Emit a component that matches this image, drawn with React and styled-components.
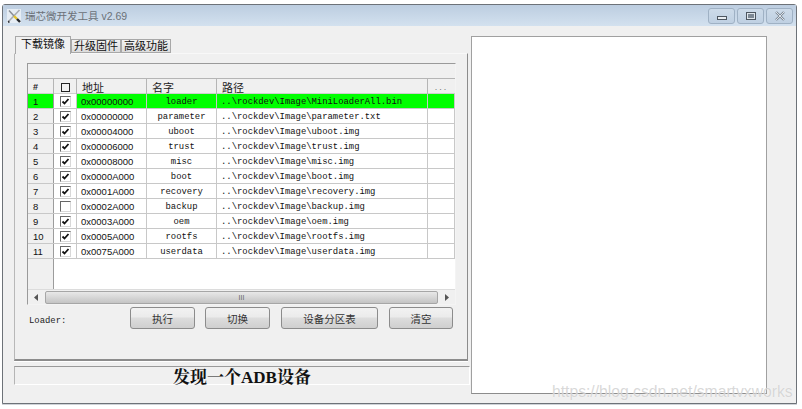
import styled, { createGlobalStyle } from 'styled-components';

const GlobalStyle = createGlobalStyle`
  html, body {
    margin: 0;
    padding: 0;
    background: #ffffff;
  }
`;

const CJK = '"Liberation Sans", "Noto Sans CJK SC", sans-serif';
const MONO = '"Liberation Mono", "Noto Sans CJK SC", monospace';
const SERIF = '"Liberation Serif", "Noto Serif CJK SC", "Noto Sans CJK SC", serif';

const rows = [
  ['1', true, '0x00000000', 'loader', '..\\rockdev\\Image\\MiniLoaderAll.bin'],
  ['2', true, '0x00000000', 'parameter', '..\\rockdev\\Image\\parameter.txt'],
  ['3', true, '0x00004000', 'uboot', '..\\rockdev\\Image\\uboot.img'],
  ['4', true, '0x00006000', 'trust', '..\\rockdev\\Image\\trust.img'],
  ['5', true, '0x00008000', 'misc', '..\\rockdev\\Image\\misc.img'],
  ['6', true, '0x0000A000', 'boot', '..\\rockdev\\Image\\boot.img'],
  ['7', true, '0x0001A000', 'recovery', '..\\rockdev\\Image\\recovery.img'],
  ['8', false, '0x0002A000', 'backup', '..\\rockdev\\Image\\backup.img'],
  ['9', true, '0x0003A000', 'oem', '..\\rockdev\\Image\\oem.img'],
  ['10', true, '0x0005A000', 'rootfs', '..\\rockdev\\Image\\rootfs.img'],
  ['11', true, '0x0075A000', 'userdata', '..\\rockdev\\Image\\userdata.img'],
];

const COLUMNS = '26px 23px 70px 70px 211px 1fr';

function App() {
  return (
    <>
      <GlobalStyle />
      <Page>
        <Window>
          <TitleBar>
            <AppIcon viewBox="0 0 14 14">
              <path d="M0 0h14v14H0z" fill="#e6edf4" />
              <path d="M12.500 1L2 12" stroke="#a8adb3" strokeWidth="1.600" />
              <path d="M2.500 12.500L1 13" stroke="#33363a" strokeWidth="2" />
              <path d="M2 1.500L7 7" stroke="#8a8f96" strokeWidth="1.500" />
              <path d="M7 7l3 3" stroke="#e2c22e" strokeWidth="2.400" />
              <path d="M10 10l3 3" stroke="#26282b" strokeWidth="2.400" />
            </AppIcon>
            <Title>瑞芯微开发工具 v2.69</Title>
            <Controls>
              <ControlButton>
                <MinGlyph />
              </ControlButton>
              <ControlButton>
                <MaxGlyph />
              </ControlButton>
              <ControlButton>
                <CloseGlyph viewBox="0 0 12 10">
                  <path d="M2 1l8 8M10 1L2 9" stroke="#7f8a96" strokeWidth="2.400" fill="none" />
                  <path d="M2 1l8 8M10 1L2 9" stroke="#e6ecf2" strokeWidth="0.900" fill="none" />
                </CloseGlyph>
              </ControlButton>
            </Controls>
          </TitleBar>
          <Body>
            <LeftColumn>
              <Tabs>
                <Tab active>下载镜像</Tab>
                <Tab>升级固件</Tab>
                <Tab>高级功能</Tab>
              </Tabs>
              <TabPanel>
                <ListFrame>
                  <TopStrip />
                  <HeaderRow>
                    <HeaderCell first>#</HeaderCell>
                    <HeaderCell center>
                      <HeaderBox />
                    </HeaderCell>
                    <HeaderCell>地址</HeaderCell>
                    <HeaderCell>名字</HeaderCell>
                    <HeaderCell>路径</HeaderCell>
                    <HeaderDots>...</HeaderDots>
                  </HeaderRow>
                  <RowList>
                    {rows.map(([index, checked, address, name, path], i) => (
                      <Row key={index} selected={i === 0}>
                        <IndexCell selected={i === 0}>{index}</IndexCell>
                        <CheckCell>
                          <CheckBox>
                            {checked && (
                              <svg width="9" height="9" viewBox="0 0 9 9">
                                <path d="M1.500 4.500l2 2L7.500 2" stroke="#111" strokeWidth="1.800" fill="none" />
                              </svg>
                            )}
                          </CheckBox>
                        </CheckCell>
                        <AddressCell>{address}</AddressCell>
                        <NameCell>{name}</NameCell>
                        <PathCell>{path}</PathCell>
                        <BlankCell />
                      </Row>
                    ))}
                    <EmptyArea />
                  </RowList>
                  <ScrollBar>
                    <ScrollArrow viewBox="0 0 5 7">
                      <path d="M4 0v7L0 3.500z" fill="#555" />
                    </ScrollArrow>
                    <ScrollThumb>
                      <Grip>III</Grip>
                    </ScrollThumb>
                    <ScrollArrow viewBox="0 0 5 7">
                      <path d="M1 0v7l4-3.500z" fill="#555" />
                    </ScrollArrow>
                  </ScrollBar>
                </ListFrame>
                <ActionRow>
                  <LoaderLabel>Loader:</LoaderLabel>
                  <ActionButton width={65}>执行</ActionButton>
                  <ActionButton width={65}>切换</ActionButton>
                  <ActionButton width={97} offset={1}>设备分区表</ActionButton>
                  <ActionButton width={64} offset={1}>清空</ActionButton>
                </ActionRow>
              </TabPanel>
              <StatusBar>发现一个ADB设备</StatusBar>
            </LeftColumn>
            <LogPanel />
          </Body>
        </Window>
        <Watermark>https://blog.csdn.net/smartvxworks</Watermark>
      </Page>
    </>
  );
}

const Page = styled.div`
  position: relative;
  width: 802px;
  height: 409px;
  overflow: hidden;
  padding: 4px 0 0 2px;
  box-sizing: border-box;
`;

const Window = styled.div`
  width: 795px;
  height: 400px;
  box-sizing: border-box;
  background: #f0f0f0;
  border: 1px solid #6d7278;
  border-radius: 3px 3px 0 0;
  box-shadow: 0 1px 0 #cfd3d8;
  display: flex;
  flex-direction: column;
  font-family: ${CJK};
`;

const TitleBar = styled.div`
  height: 21px;
  flex: none;
  display: flex;
  align-items: center;
  padding: 0 3px 0 4px;
  background: linear-gradient(#bccde0, #d3e1ef);
`;

const AppIcon = styled.svg`
  width: 14px;
  height: 14px;
  flex: none;
`;

const Title = styled.div`
  margin-left: 4px;
  font-size: 10.5px;
  color: #6b7178;
`;

const Controls = styled.div`
  margin-left: auto;
  display: flex;
  gap: 2px;
`;

const ControlButton = styled.div`
  width: 27px;
  height: 16px;
  box-sizing: border-box;
  border: 1px solid #9fb1c4;
  border-radius: 3px;
  background: linear-gradient(#cddbe9, #bfd0e2);
  display: flex;
  align-items: center;
  justify-content: center;
`;

const MinGlyph = styled.div`
  width: 10px;
  height: 4px;
  margin-top: 4px;
  box-sizing: border-box;
  border: 1px solid #4d5660;
  background: #e8edf2;
`;

const MaxGlyph = styled.div`
  width: 10px;
  height: 8px;
  box-sizing: border-box;
  border: 1px solid #4d5660;
  background: #7d8894;
  box-shadow: inset 0 0 0 1px #dfe6ec;
`;

const CloseGlyph = styled.svg`
  width: 12px;
  height: 10px;
`;

const Body = styled.div`
  flex: 1;
  display: flex;
  align-items: flex-start;
  padding: 10px 0 0 11px;
  gap: 1px;
`;

const LeftColumn = styled.div`
  width: 456px;
  flex: none;
`;

const Tabs = styled.div`
  display: flex;
  align-items: flex-end;
  height: 17px;
  padding-left: 1px;
  position: relative;
  z-index: 1;
`;

const Tab = styled.div`
  box-sizing: border-box;
  height: ${({ active }) => (active ? '18px' : '14px')};
  margin-bottom: ${({ active }) => (active ? '-1px' : '0')};
  padding: 0 ${({ active }) => (active ? '5px' : '2px')};
  font-size: 11px;
  line-height: ${({ active }) => (active ? '15px' : '13px')};
  color: #111;
  background: ${({ active }) => (active ? '#f0f0f0' : 'linear-gradient(#f2f2f2, #dcdcdc)')};
  border: 1px solid #a8a8a8;
  border-bottom: ${({ active }) => (active ? 'none' : '1px solid #a8a8a8')};
`;

const TabPanel = styled.div`
  box-sizing: border-box;
  width: 454px;
  height: 308px;
  padding: 9px 12px 0 12px;
  border: 1px solid #b8b8b8;
  border-top-color: #f8f8f8;
  border-right-color: #8c8c8c;
  border-bottom: 2px solid #8c8c8c;
  box-shadow: 0 1px 0 #ffffff;
`;

const ListFrame = styled.div`
  box-sizing: border-box;
  width: 429px;
  height: 242px;
  border: 1px solid #9a9a9a;
  border-right-color: #f4f4f4;
  border-bottom-color: #f4f4f4;
  display: flex;
  flex-direction: column;
`;

const TopStrip = styled.div`
  height: 14px;
  flex: none;
  background: #f0f0f0;
  border-bottom: 1px solid #b5b5b5;
`;

const HeaderRow = styled.div`
  display: grid;
  grid-template-columns: ${COLUMNS};
  height: 15px;
  flex: none;
  box-sizing: border-box;
  border-bottom: 1px solid #cfcfcf;
  background: #f0f0f0;
`;

const HeaderCell = styled.div`
  box-sizing: border-box;
  padding-left: ${({ center }) => (center ? '0' : '5px')};
  border-right: 1px solid #b5b5b5;
  display: flex;
  align-items: center;
  justify-content: ${({ center }) => (center ? 'center' : 'flex-start')};
  font-size: ${({ first }) => (first ? '9px' : '11px')};
  font-weight: ${({ first }) => (first ? 700 : 400)};
  color: #222;
`;

const HeaderDots = styled.div`
  display: flex;
  align-items: center;
  justify-content: center;
  font-size: 9px;
  letter-spacing: 2px;
  color: #777;
`;

const HeaderBox = styled.span`
  display: block;
  width: 9px;
  height: 9px;
  box-sizing: border-box;
  border: 1px solid #222;
`;

const RowList = styled.div`
  flex: 1;
  display: flex;
  flex-direction: column;
  background: #ffffff;
  min-height: 0;
`;

const Row = styled.div`
  display: grid;
  grid-template-columns: ${COLUMNS};
  height: 15px;
  flex: none;
  box-sizing: border-box;
  border-bottom: 1px solid #c8c8c8;
  background: ${({ selected }) => (selected ? '#00ff00' : '#ffffff')};
  font-size: 9.5px;
  color: #111;
`;

const Cell = styled.div`
  box-sizing: border-box;
  border-right: 1px solid #c8c8c8;
  display: flex;
  align-items: center;
  white-space: nowrap;
  overflow: hidden;
`;

const IndexCell = styled(Cell)`
  padding-left: 5px;
  font-size: 9.5px;
  background: ${({ selected }) => (selected ? '#00ff00' : '#f0f0f0')};
  border-right-color: #9c9c9c;
`;

const CheckCell = styled(Cell)`
  justify-content: center;
  background: #ffffff;
`;

const CheckBox = styled.span`
  width: 11px;
  height: 11px;
  box-sizing: border-box;
  border: 1px solid #666666;
  border-right-color: #d8d8d8;
  border-bottom-color: #d8d8d8;
  background: #ffffff;
  display: flex;
  align-items: center;
  justify-content: center;
`;

const AddressCell = styled(Cell)`
  padding-left: 4px;
  font-size: 9.5px;
`;

const NameCell = styled(Cell)`
  justify-content: center;
  padding-top: 2px;
  font-family: ${MONO};
  font-size: 8.9px;
`;

const PathCell = styled(Cell)`
  padding: 2px 0 0 4px;
  font-family: ${MONO};
  font-size: 8.9px;
`;

const BlankCell = styled(Cell)``;

const EmptyArea = styled.div`
  flex: 1;
  width: 26px;
  box-sizing: border-box;
  background: #f0f0f0;
  border-right: 1px solid #9c9c9c;
`;

const ScrollBar = styled.div`
  height: 14px;
  flex: none;
  display: flex;
  align-items: center;
  background: #f0f0f0;
  border-top: 1px solid #dcdcdc;
`;

const ScrollArrow = styled.svg`
  width: 5px;
  height: 7px;
  flex: none;
  margin: 0 6px;
`;

const ScrollThumb = styled.div`
  flex: 1;
  height: 13px;
  box-sizing: border-box;
  border: 1px solid #a6a6a6;
  border-radius: 2px;
  background: linear-gradient(#e8e8e8, #c4c4c4);
  display: flex;
  align-items: center;
  justify-content: center;
`;

const Grip = styled.span`
  font-size: 7px;
  color: #666;
`;

const ActionRow = styled.div`
  display: flex;
  align-items: center;
  height: 22px;
  margin-top: 2px;
  gap: 10px;
  padding-left: 2px;
`;

const LoaderLabel = styled.div`
  width: 91px;
  padding-top: 5px;
  font-family: ${MONO};
  font-size: 8.9px;
  color: #222;
`;

const ActionButton = styled.div`
  width: ${({ width }) => width}px;
  height: 22px;
  margin-left: ${({ offset }) => offset || 0}px;
  box-sizing: border-box;
  border: 1px solid #8c8c8c;
  border-radius: 3px;
  background: linear-gradient(#f2f2f2 0%, #ebebeb 45%, #dddddd 50%, #cfcfcf 100%);
  display: flex;
  align-items: center;
  justify-content: center;
  font-size: 10.5px;
  color: #333;
`;

const StatusBar = styled.div`
  box-sizing: border-box;
  width: 456px;
  height: 19px;
  margin-top: 5px;
  border-top: 1px solid #9a9a9a;
  border-left: 1px solid #b5b5b5;
  border-bottom: 1px solid #ffffff;
  border-right: 1px solid #ffffff;
  display: flex;
  align-items: center;
  justify-content: center;
  font-family: ${SERIF};
  font-size: 17px;
  font-weight: 700;
  color: #111;
`;

const LogPanel = styled.div`
  width: 296px;
  height: 358px;
  box-sizing: border-box;
  background: #ffffff;
  border: 1px solid #a0a0a0;
  border-bottom: 1px solid #8c8c8c;
`;

const Watermark = styled.div`
  position: absolute;
  left: 552px;
  top: 383px;
  font-family: "Liberation Sans", sans-serif;
  font-size: 15.7px;
  color: rgba(190, 190, 190, 0.6);
  text-shadow: 0 0 1px rgba(255, 255, 255, 0.9);
  white-space: nowrap;
`;

export default App;
